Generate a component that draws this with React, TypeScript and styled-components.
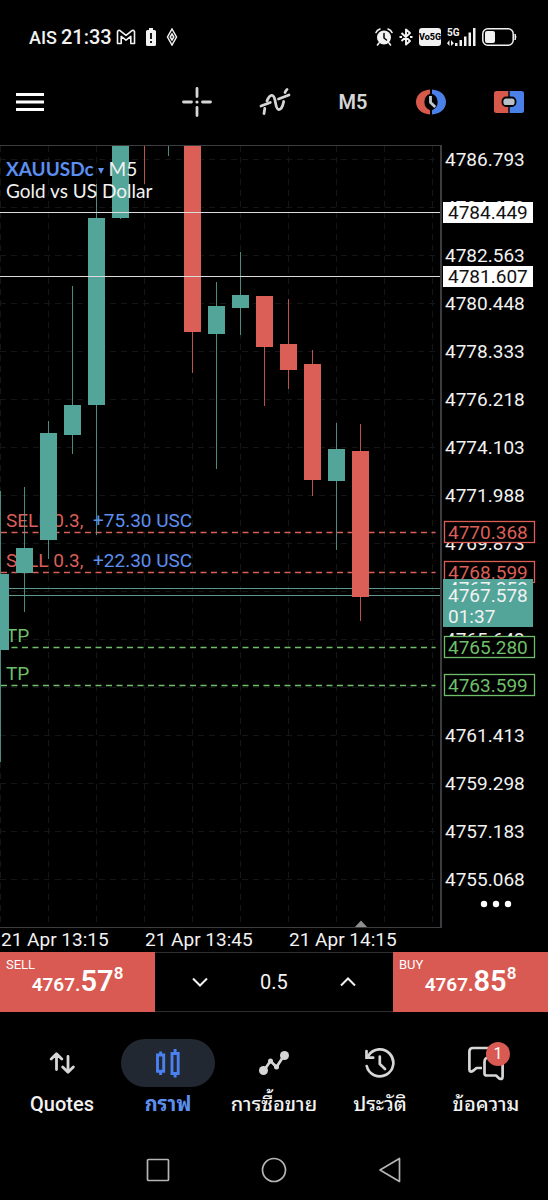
import React from "react";
import styled, { createGlobalStyle } from "styled-components";

const GlobalStyle = createGlobalStyle`
  * { box-sizing: border-box; }
  html, body { margin: 0; background: #000; }
  body {
    color: #f2f2f2;
    font-family: Roboto, "Noto Sans Thai Looped", Loma, Garuda, "Noto Sans Thai", "Noto Sans", sans-serif;
  }
  button, input {
    margin: 0; padding: 0; border: 0; background: none;
    color: inherit; font: inherit; cursor: pointer;
  }
`;

const TEAL = "#53a499";
const RED = "#dc5f57";
const BLUE = "#5b8ff0";
const GREEN = "#6fbf6a";
const FRAME = "#3b3d41";
const SANS = "Roboto, sans-serif";

const Page = styled.main`
  display: flex;
  flex-direction: column;
  min-height: 100vh;
`;

/* ---------- status bar ---------- */

const StatusBar = styled.header`
  display: flex;
  align-items: center;
  justify-content: space-between;
  height: 74px;
  padding: 0 31px 0 29px;
`;

const StatusGroup = styled.div<{ $gap: number }>`
  display: flex;
  align-items: center;
  gap: ${(p) => p.$gap}px;
`;

const Carrier = styled.span`
  font-size: 18px;
  font-weight: 500;
`;

const Clock = styled.time`
  font-size: 20px;
  font-weight: 500;
`;

const VoBadge = styled.span`
  width: 22px;
  height: 18px;
  border-radius: 3px;
  background: #f2f2f2;
  color: #000;
  font: 800 9px/18px Roboto, sans-serif;
  text-align: center;
`;

/* ---------- toolbar ---------- */

const Toolbar = styled.nav`
  display: flex;
  align-items: center;
  height: 56px;
  margin-bottom: 15px;
`;

const MenuButton = styled.button`
  display: flex;
  justify-content: center;
  width: 60px;
  margin-right: auto;
`;

const ToolButton = styled.button`
  display: flex;
  align-items: center;
  justify-content: center;
  width: 78px;
  height: 56px;
  color: #d6d6d6;
  font-size: 20px;
  font-weight: 600;
`;

/* ---------- chart ---------- */

const CHART_HEIGHT = 783;

const ChartArea = styled.section`
  position: relative;
  display: flex;
`;

const Plot = styled.div`
  flex: 1;
  min-width: 0;
  height: ${CHART_HEIGHT}px;
  border: solid ${FRAME};
  border-width: 1px 2px 1px 0;

  svg { display: block; }
`;

const PriceScale = styled.div`
  width: 106px;
  height: ${CHART_HEIGHT}px;

  svg { display: block; }
`;

const ChartTitle = styled.div`
  position: absolute;
  top: 13px;
  left: 6px;
  font-family: Lato, sans-serif;
  font-size: 19px;
  line-height: 22px;
`;

const SymbolButton = styled.button`
  color: ${BLUE};
  font-weight: 700;
  line-height: 22px;
`;

const Arrow = styled.svg`
  margin: 0 0 2px 4px;
`;

const MoreButton = styled.button`
  position: absolute;
  right: 35px;
  bottom: 16px;
  display: flex;
  align-items: center;
  height: 16px;
`;

const TimeScale = styled.div`
  display: flex;
  height: 24px;
  padding-left: 1px;
  font-size: 19px;
  line-height: 24px;

  span { width: 144px; }
`;

/* ---------- trade panel ---------- */

const TradePanel = styled.section`
  display: flex;
  height: 60px;
`;

const DealButton = styled.button`
  position: relative;
  flex: 155;
  background: #d85a52;
  color: #fff;
`;

const DealSide = styled.span`
  position: absolute;
  top: 4px;
  left: 6px;
  font-size: 13px;
  line-height: 18px;
`;

const DealPrice = styled.span`
  display: flex;
  align-items: baseline;
  justify-content: center;
  font-weight: 600;
  font-size: 19px;
  line-height: 58px;

  b { font-size: 29px; font-weight: 600; }
  sup { align-self: flex-start; font-size: 17px; line-height: 42px; }
`;

const Volume = styled.div`
  flex: 238;
  display: flex;
  align-items: center;
  justify-content: center;
  border: solid #2c2e32;
  border-width: 1px 0;
`;

const StepButton = styled.button`
  display: flex;
  align-items: center;
  justify-content: center;
  width: 48px;
  height: 48px;
`;

const VolumeInput = styled.input`
  width: 100px;
  font-size: 20px;
  text-align: center;
  outline: none;
`;

/* ---------- bottom navigation ---------- */

const BottomNav = styled.nav`
  display: flex;
  height: 128px;
  padding: 27px 9px 0;
`;

const Tab = styled.a<{ $active?: boolean }>`
  flex: 1;
  display: flex;
  flex-direction: column;
  align-items: center;
  gap: 4px;
  color: ${(p) => (p.$active ? BLUE : "#f2f2f2")};
  font-size: 20px;
  font-weight: ${(p) => (p.$active ? 700 : 500)};
  line-height: 26px;
  text-decoration: none;
  white-space: nowrap;
`;

const TabIcon = styled.span<{ $active?: boolean }>`
  position: relative;
  display: flex;
  align-items: center;
  justify-content: center;
  width: 94px;
  height: 48px;
  border-radius: 24px;
  background: ${(p) => (p.$active ? "#222831" : "transparent")};
  color: ${(p) => (p.$active ? "#4a80f0" : "#d6d6d6")};
`;

const Badge = styled.span`
  position: absolute;
  top: 3px;
  left: 47px;
  width: 24px;
  height: 24px;
  border-radius: 50%;
  background: #d85a52;
  color: #fff;
  font-size: 16px;
  font-weight: 400;
  line-height: 24px;
  text-align: center;
`;

const SystemNav = styled.nav`
  display: flex;
  align-items: center;
  justify-content: center;
  gap: 90px;
  height: 60px;

  button { display: flex; }
`;

/* ---------- chart data ---------- */

/* Prices run 2.115 per 48px grid row; the first row sits at 4786.793. */
const FIRST_PRICE = 4786.793;
const STEP = 2.115;
const ROW = 48;
const FIRST_ROW = 14;
const toY = (price: number) =>
  Math.floor(FIRST_ROW + ((FIRST_PRICE - price) / STEP) * ROW + 0.25);

const ticks = Array.from({ length: 16 }, (_, i) => FIRST_PRICE - i * STEP);

type Candle = { x: number; high: number; top: number; bottom: number; low: number; up: boolean };

const candles: Candle[] = [
  { x: 1, high: 346, top: 429, bottom: 505, low: 617, up: true },
  { x: 25, high: 342, top: 403, bottom: 428, low: 467, up: true },
  { x: 49, high: 276, top: 288, bottom: 395, low: 414, up: true },
  { x: 73, high: 141, top: 260, bottom: 290, low: 309, up: true },
  { x: 97, high: 39, top: 73, bottom: 260, low: 390, up: true },
  { x: 121, high: 0, top: 0, bottom: 73, low: 74, up: true },
  { x: 145, high: 0, top: 0, bottom: 0, low: 39, up: false },
  { x: 169, high: 0, top: 0, bottom: 0, low: 11, up: true },
  { x: 193, high: 0, top: 0, bottom: 187, low: 228, up: false },
  { x: 217, high: 137, top: 161, bottom: 189, low: 324, up: true },
  { x: 241, high: 107, top: 150, bottom: 163, low: 190, up: true },
  { x: 265, high: 151, top: 151, bottom: 202, low: 261, up: false },
  { x: 289, high: 154, top: 199, bottom: 225, low: 244, up: false },
  { x: 313, high: 205, top: 219, bottom: 335, low: 351, up: false },
  { x: 337, high: 278, top: 304, bottom: 336, low: 405, up: true },
  { x: 361, high: 279, top: 306, bottom: 452, low: 476, up: false },
];

const orders = [
  { price: 4770.368, color: RED, label: "SELL 0.3,", profit: "+75.30 USC" },
  { price: 4768.599, color: RED, label: "SELL 0.3,", profit: "+22.30 USC" },
  { price: 4765.28, color: GREEN, label: "TP", profit: "" },
  { price: 4763.599, color: GREEN, label: "TP", profit: "" },
];

const levels = [4784.449, 4781.607];
const ASK = 4767.858;
const BID = 4767.578;

/* A tick whose label would lie wholly under a price tag is left out. */
const tagged = [...orders.map((o) => o.price), ...levels, ASK, BID];
const labelledTicks = ticks.filter((t) => tagged.every((p) => Math.abs(p - t) > 0.15));

function PlotDrawing() {
  return (
    <svg width="100%" height={CHART_HEIGHT - 2} fontFamily={SANS} fontSize="19">
      <g stroke="#141516" strokeDasharray="6 5">
        {ticks.map((t) => (
          <line key={t} x1="0" x2="100%" y1={toY(t) - 0.5} y2={toY(t) - 0.5} />
        ))}
        {Array.from({ length: 10 }, (_, i) => (
          <line key={i} x1={i * 48 + 0.5} x2={i * 48 + 0.5} y1="0" y2="100%" />
        ))}
      </g>

      {orders.map((o) => (
        <g key={o.price}>
          <line x1="1" x2="99%" y1={toY(o.price) - 0.5} y2={toY(o.price) - 0.5}
            stroke={o.color} strokeWidth="1.4" strokeDasharray="6 4.5" />
          <text x="6" y={toY(o.price) - 6} fill={o.color}>{o.label}</text>
          {o.profit && <text x="93" y={toY(o.price) - 6} fill={BLUE}>{o.profit}</text>}
        </g>
      ))}

      {[ASK, BID].map((p) => (
        <line key={p} x1="0" x2="100%" y1={toY(p) - 0.5} y2={toY(p) - 0.5} stroke="#5b978e" />
      ))}

      {candles.map((c) => (
        <g key={c.x} fill={c.up ? TEAL : RED}>
          <rect x={c.x - 1} y={c.high - 1} width="1" height={c.low - c.high} opacity="0.85" />
          <rect x={c.x - 9} y={c.top - 1} width="17" height={c.bottom - c.top} />
        </g>
      ))}

      {levels.map((p) => (
        <line key={p} x1="0" x2="100%" y1={toY(p) - 0.5} y2={toY(p) - 0.5} stroke="#dcdcdc" strokeWidth="1.2" />
      ))}

      <path d="M354 782l7-7.500 7 7.500z" fill="#8f8f8f" />
    </svg>
  );
}

function ScaleDrawing() {
  return (
    <svg width="106" height={CHART_HEIGHT} fontFamily={SANS} fontSize="19" fill="#f2f2f2">
      {labelledTicks.map((t) => (
        <text key={t} x="3" y={toY(t) + 7}>{t.toFixed(3)}</text>
      ))}
      {levels.map((p) => (
        <g key={p}>
          <rect x="1" y={toY(p) - 10} width="90" height="21" fill="#fff" />
          <text x="6" y={toY(p) + 7} fill="#111">{p.toFixed(3)}</text>
        </g>
      ))}
      {orders.map((o) => (
        <g key={o.price}>
          <rect x="2.500" y={toY(o.price) - 10.5} width="90" height="21" fill="#000" stroke={o.color} strokeWidth="1.3" />
          <text x="6" y={toY(o.price) + 7} fill={o.color}>{o.price.toFixed(3)}</text>
        </g>
      ))}
      <rect x="1" y={toY(ASK) - 9} width="90" height="20" fill={TEAL} />
      <text x="6" y={toY(ASK) + 7}>{ASK.toFixed(3)}</text>
      <rect x="1" y={toY(BID) - 10} width="90" height="42" fill={TEAL} />
      <text x="6" y={toY(BID) + 7}>{BID.toFixed(3)}</text>
      <text x="6" y={toY(BID) + 28}>01:37</text>
    </svg>
  );
}

/* ---------- icons ---------- */

const GmailIcon = () => (
  <svg width="20" height="16" viewBox="0 0 20 16" fill="none" stroke="#f2f2f2" strokeWidth="1.6" strokeLinejoin="round">
    <path d="M1.500 14.500V2.800Q2 .8 4 1.600L10 6.300 16 1.600Q18 .8 18.500 2.800V14.500H14.800V7.400L10 11.200 5.200 7.400V14.500Z" />
  </svg>
);

const BatteryAlertIcon = () => (
  <svg width="10" height="18" viewBox="0 0 10 18">
    <path d="M3 0h4v2h1.500Q10 2 10 3.500v13Q10 18 8.500 18h-7Q0 18 0 16.500v-13Q0 2 1.500 2H3z" fill="#f2f2f2" />
    <path d="M5 5v6M5 13v2" stroke="#000" strokeWidth="1.800" />
  </svg>
);

const DiamondIcon = () => (
  <svg width="12" height="18" viewBox="0 0 12 18" fill="none" stroke="#f2f2f2" strokeWidth="1.500">
    <path d="M6 1l4.500 8L6 17 1.500 9z" />
    <path d="M6 6l1.800 3L6 12 4.200 9z" />
  </svg>
);

const AlarmIcon = () => (
  <svg width="18" height="18" viewBox="0 0 18 18" fill="none" strokeLinecap="round">
    <circle cx="9" cy="9.500" r="7" fill="#f2f2f2" />
    <path d="M1 4.500Q2 2 5 1M17 4.500Q16 2 13 1M4 15l-1.500 2M14 15l1.500 2" stroke="#f2f2f2" strokeWidth="1.600" />
    <path d="M9 5.500V10l2.500 2" stroke="#000" strokeWidth="1.500" />
  </svg>
);

const BluetoothIcon = () => (
  <svg width="14" height="18" viewBox="0 0 14 18" fill="none" stroke="#f2f2f2" strokeWidth="1.900" strokeLinejoin="round">
    <path d="M2.500 5l8.500 8-4 3.500v-15L11 5l-8.500 8" />
    <path d="M.5 9h2.500M11 9h2.500" />
  </svg>
);

const SignalIcon = () => (
  <svg width="29" height="18" viewBox="0 0 29 18" fill="#f2f2f2">
    <text x="0" y="8" fontFamily={SANS} fontSize="10" fontWeight="700">5G</text>
    <path d="M8 15h2.500v3H8zM12.500 12H15v6h-2.500zM17 8.500h2.500V18H17zM21.500 4.500H24V18h-2.500zM26 0h2.500v18H26z" />
    <path d="M2.500 12v6L0 15.200zM4 12v6l2.800-2.800z" />
  </svg>
);

const BatteryIcon = () => (
  <svg width="35" height="18" viewBox="0 0 35 18">
    <rect x=".8" y=".8" width="30.400" height="16.400" rx="5" fill="none" stroke="#f2f2f2" strokeWidth="1.500" />
    <rect x="3" y="3" width="10" height="12" rx="2" fill="#f2f2f2" />
    <path d="M33 6q2 3 0 6z" fill="#f2f2f2" stroke="#f2f2f2" />
  </svg>
);

const MenuIcon = () => (
  <svg width="28" height="20" viewBox="0 0 28 20" fill="#fff">
    <path d="M0 1h28v3H0zM0 8.500h28v3H0zM0 16h28v3H0z" />
  </svg>
);

const CrosshairIcon = () => (
  <svg width="30" height="30" viewBox="0 0 30 30" stroke="currentColor" strokeWidth="2.800" strokeLinecap="round">
    <path d="M15 1.500v8M15 20.500v8M1.500 15h8M20.500 15h8" />
    <circle cx="15" cy="15" r="1.600" fill="currentColor" stroke="none" />
  </svg>
);

const IndicatorIcon = () => (
  <svg width="32" height="30" viewBox="0 0 32 30" fill="none" stroke="currentColor" strokeWidth="2.800" strokeLinecap="round">
    <path d="M2 19L11.300 15.500M19.500 12L30 8" />
    <path d="M8 14Q10.500 7.500 13.500 8.500C17.500 10 15.500 21.500 19.500 22.500Q23 23 24.700 14.500" />
    <path d="M5.800 21.500L5 26.500M26 5.500q.8-2 2-3" />
  </svg>
);

const ClockSplitIcon = () => (
  <svg width="30" height="26" viewBox="0 0 30 26" fill="none">
    <path d="M14 .5v4.300a8.800 8.800 0 0 0 0 16.400v4.300C6 25 0 20 0 13S6 1 14 .5z" fill="#d6594c" />
    <path d="M16 .5v4.300a8.800 8.800 0 0 1 0 16.400v4.300C24 25 30 20 30 13S24 1 16 .5z" fill="#4a80e8" />
    <path d="M14.500 7v6.500l4.700 4.500" stroke="#c3c9ce" strokeWidth="2.800" />
  </svg>
);

const TradeSplitIcon = () => (
  <svg width="30" height="22" viewBox="0 0 30 22">
    <path d="M14.300 0v22H2.500Q0 22 0 19.500v-17Q0 0 2.500 0z" fill="#d6594c" />
    <path d="M15.700 0v22h11.800q2.500 0 2.500-2.500v-17Q30 0 27.500 0z" fill="#4a80e8" />
    <rect x="8.500" y="6.500" width="13" height="8.500" rx="3.500" fill="#b9c1c8" stroke="#000" strokeWidth="1.800" />
  </svg>
);

const Chevron = ({ up }: { up?: boolean }) => (
  <svg width="16" height="10" viewBox="0 0 16 10" fill="none" stroke="#f2f2f2" strokeWidth="2">
    <path d={up ? "M1 8.500l7-7 7 7" : "M1 1.500l7 7 7-7"} />
  </svg>
);

const QuotesIcon = () => (
  <svg width="26" height="22" viewBox="0 0 26 22" fill="none" stroke="currentColor" strokeWidth="2.800" strokeLinecap="round" strokeLinejoin="round">
    <path d="M7.500 17.500V2M2.200 7l5.300-5.300L12.800 7M19 4.500V20M13.700 15l5.300 5.300L24.300 15" />
  </svg>
);

const ChartIcon = () => (
  <svg width="24" height="30" viewBox="0 0 24 30" fill="none" stroke="currentColor" strokeWidth="2.900">
    <path d="M1.500 7h6.200v16.200H1.500zM4.600 3.500v3.500M4.600 23.500v3.500M16 5.500h6.200v20H16zM19.100 1v4.500M19.100 25.500v4" />
  </svg>
);

const TradeIcon = () => (
  <svg width="30" height="28" viewBox="0 0 30 28" fill="none" stroke="currentColor" strokeWidth="2.700">
    <path d="M4.500 22L11.500 12 17.500 18 25 6.500" />
    <g fill="currentColor" stroke="none">
      <circle cx="4.500" cy="21.500" r="4.500" />
      <circle cx="11.500" cy="12" r="2.500" />
      <circle cx="17.500" cy="18" r="2.500" />
      <circle cx="25.500" cy="6.500" r="4.500" />
    </g>
  </svg>
);

const HistoryIcon = () => (
  <svg width="32" height="32" viewBox="0 0 32 32" fill="none" stroke="currentColor" strokeWidth="2.700" strokeLinecap="round">
    <path d="M4.500 8.500A13.500 13.500 0 1 1 2.700 19" />
    <path d="M2.500 4v6.700h6.700" />
    <path d="M15.800 9.500v7.500l5.200 5" />
  </svg>
);

const MessagesIcon = () => (
  <svg width="38" height="36" viewBox="0 0 38 36" fill="none" stroke="currentColor" strokeWidth="2.700" strokeLinejoin="round">
    <path d="M15 23H9.500L6.500 25.500Q2.400 28 2.400 24.500V6.500Q2.400 3 6 3H27Q30.500 3 30.500 6.500V13" />
    <path d="M17.500 28.500V17Q17.500 12.500 22 12.500H32Q35.600 12.500 35.600 16.500V31.500Q35.600 35 32.300 33.500L29 30.500H20Q17.500 30.500 17.500 28.500Z" />
  </svg>
);

/* ---------- page ---------- */

export default function App() {
  return (
    <Page>
      <GlobalStyle />
      <StatusBar>
        <StatusGroup $gap={10}>
          <StatusGroup $gap={4}>
            <Carrier>AIS</Carrier>
            <Clock>21:33</Clock>
            <GmailIcon />
          </StatusGroup>
          <BatteryAlertIcon />
          <DiamondIcon />
        </StatusGroup>
        <StatusGroup $gap={6}>
          <AlarmIcon />
          <BluetoothIcon />
          <VoBadge>Vo5G</VoBadge>
          <SignalIcon />
          <BatteryIcon />
        </StatusGroup>
      </StatusBar>

      <Toolbar>
        <MenuButton aria-label="Menu"><MenuIcon /></MenuButton>
        <ToolButton aria-label="Crosshair"><CrosshairIcon /></ToolButton>
        <ToolButton aria-label="Indicators"><IndicatorIcon /></ToolButton>
        <ToolButton>M5</ToolButton>
        <ToolButton aria-label="Sessions"><ClockSplitIcon /></ToolButton>
        <ToolButton aria-label="One-click trading"><TradeSplitIcon /></ToolButton>
      </Toolbar>

      <ChartArea>
        <Plot><PlotDrawing /></Plot>
        <PriceScale><ScaleDrawing /></PriceScale>
        <ChartTitle>
          <SymbolButton>
            XAUUSDc
            <Arrow width="6" height="6" viewBox="0 0 6 6" fill={BLUE}><path d="M0 0h6L3 6z" /></Arrow>
          </SymbolButton>{" "}
          M5
          <div>Gold vs US Dollar</div>
        </ChartTitle>
        <MoreButton aria-label="More">
          <svg width="34" height="8" viewBox="0 0 34 8" fill="#fff">
            <circle cx="5" cy="4" r="3.200" />
            <circle cx="17" cy="4" r="3.200" />
            <circle cx="29" cy="4" r="3.200" />
          </svg>
        </MoreButton>
      </ChartArea>
      <TimeScale>
        <span>21 Apr 13:15</span>
        <span>21 Apr 13:45</span>
        <span>21 Apr 14:15</span>
      </TimeScale>

      <TradePanel>
        <DealButton>
          <DealSide>SELL</DealSide>
          <DealPrice>4767.<b>57</b><sup>8</sup></DealPrice>
        </DealButton>
        <Volume>
          <StepButton aria-label="Decrease volume"><Chevron /></StepButton>
          <VolumeInput aria-label="Volume" defaultValue="0.5" />
          <StepButton aria-label="Increase volume"><Chevron up /></StepButton>
        </Volume>
        <DealButton>
          <DealSide>BUY</DealSide>
          <DealPrice>4767.<b>85</b><sup>8</sup></DealPrice>
        </DealButton>
      </TradePanel>

      <BottomNav>
        <Tab href="#quotes"><TabIcon><QuotesIcon /></TabIcon>Quotes</Tab>
        <Tab href="#chart" $active><TabIcon $active><ChartIcon /></TabIcon>กราฟ</Tab>
        <Tab href="#trade"><TabIcon><TradeIcon /></TabIcon>การซื้อขาย</Tab>
        <Tab href="#history"><TabIcon><HistoryIcon /></TabIcon>ประวัติ</Tab>
        <Tab href="#messages"><TabIcon><MessagesIcon /><Badge>1</Badge></TabIcon>ข้อความ</Tab>
      </BottomNav>

      <SystemNav>
        <button aria-label="Recent apps">
          <svg width="26" height="26" viewBox="0 0 26 26" fill="none" stroke="#b5b5b5" strokeWidth="1.700">
            <rect x="2.500" y="2.500" width="21" height="21" rx="1" />
          </svg>
        </button>
        <button aria-label="Home">
          <svg width="26" height="26" viewBox="0 0 26 26" fill="none" stroke="#b5b5b5" strokeWidth="1.700">
            <circle cx="13" cy="13" r="11.500" />
          </svg>
        </button>
        <button aria-label="Back">
          <svg width="26" height="26" viewBox="0 0 26 26" fill="none" stroke="#b5b5b5" strokeWidth="1.700" strokeLinejoin="round">
            <path d="M3 13L22.500 1.500v23z" />
          </svg>
        </button>
      </SystemNav>
    </Page>
  );
}
